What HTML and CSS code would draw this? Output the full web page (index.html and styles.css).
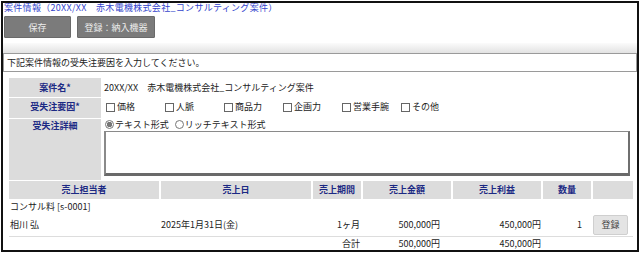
FILE: index.html
```html
<!DOCTYPE html>
<html lang="ja">
<head>
    <meta charset="UTF-8">
    <title>案件情報</title>
    <link rel="stylesheet" href="styles.css">
</head>
<body>
<div class="frame">
    <div class="head">
        <div class="title">案件情報（20XX/XX　赤木電機株式会社_コンサルティング案件）</div>
        <div class="toolbar">
            <button class="btn btn-save">保存</button>
            <button class="btn btn-reg">登録：納入機器</button>
        </div>
    </div>
    <div class="band"></div>
    <div class="notice">下記案件情報の受失注要因を入力してください。</div>

    <table class="form">
        <tr class="r1">
            <th>案件名*</th>
            <td>20XX/XX　赤木電機株式会社_コンサルティング案件</td>
        </tr>
        <tr class="r2">
            <th>受失注要因*</th>
            <td>
                <span class="chk"><i class="box"></i>価格</span><span class="chk"><i class="box"></i>人脈</span><span class="chk"><i class="box"></i>商品力</span><span class="chk"><i class="box"></i>企画力</span><span class="chk"><i class="box"></i>営業手腕</span><span class="chk"><i class="box"></i>その他</span>
            </td>
        </tr>
        <tr class="r3">
            <th>受失注詳細</th>
            <td>
                <div class="radios">
                    <span class="rad"><i class="dot on"></i>テキスト形式</span>
                    <span class="rad"><i class="dot"></i>リッチテキスト形式</span>
                </div>
                <div class="memo"></div>
            </td>
        </tr>
    </table>

    <table class="sales">
        <tr class="hd">
            <th class="c1">売上担当者</th>
            <th class="c2">売上日</th>
            <th class="c3">売上期間</th>
            <th class="c4">売上金額</th>
            <th class="c5">売上利益</th>
            <th class="c6">数量</th>
            <th class="c7"></th>
        </tr>
        <tr class="grp">
            <td colspan="7">コンサル料 [s-0001]</td>
        </tr>
        <tr class="row">
            <td class="name">相川 弘</td>
            <td class="date">2025年1月31日(金)</td>
            <td class="num n3">1ヶ月</td>
            <td class="num n4">500,000円</td>
            <td class="num n5">450,000円</td>
            <td class="num n6">1</td>
            <td class="act"><button class="btn-small">登録</button></td>
        </tr>
        <tr class="sum">
            <td></td>
            <td></td>
            <td class="num n3">合計</td>
            <td class="num n4">500,000円</td>
            <td class="num n5">450,000円</td>
            <td></td>
            <td></td>
        </tr>
    </table>
</div>
</body>
</html>
```

FILE: styles.css
```css
body {
    margin: 0;
    font-family: "Noto Sans CJK JP", "Noto Sans", sans-serif;
    font-size: 9px;
    color: #222222;
    background-color: #ffffff;
}
.frame {
    margin: 1px;
    height: 247px;
    border: 2px solid #111111;
    overflow: hidden;
}
.head {
    margin: -3px 0 0 -3px;
    width: 290px;
    height: 43px;
    padding: 1px 0 0 4px;
    box-sizing: border-box;
    background-color: #ffffff;
}
.title {
    color: #3344cc;
    line-height: 13px;
    white-space: nowrap;
    letter-spacing: 0.3px;
}
.toolbar {
    display: flex;
    gap: 6px;
    margin-top: 2px;
}
.btn {
    height: 22px;
    padding: 0;
    border: 1px solid #6a6a6a;
    border-radius: 1px;
    background-color: #7b7b7b;
    color: #ececec;
    font-family: inherit;
    font-size: 9px;
}
.btn-save {
    width: 67px;
}
.btn-reg {
    width: 78px;
}
.band {
    margin-left: -3px;
    width: 637px;
    height: 10px;
    background: linear-gradient(#fbfbfb, #e2e2e2);
}
.notice {
    height: 17px;
    line-height: 17px;
    padding-left: 3px;
    border: 1px solid #9a9a9a;
}

/* form */
.form {
    width: 629px;
    margin: 5px 0 0 4px;
    border-spacing: 2px 1px;
}
.form th {
    width: 92px;
    padding: 0;
    background-color: #dcdcdc;
    color: #1c2a84;
    font-weight: bold;
    text-align: center;
    vertical-align: top;
}
.form td {
    padding: 0 0 0 1px;
    vertical-align: top;
}
.r1 th, .r1 td {
    height: 19px;
    line-height: 19px;
}
.r2 th, .r2 td {
    height: 18px;
    line-height: 18px;
}
.r3 th {
    height: 61px;
    line-height: 12px;
    padding-top: 1px;
    box-sizing: border-box;
}
.chk {
    display: inline-flex;
    align-items: center;
    width: 59px;
}
.box {
    width: 7px;
    height: 7px;
    margin: 0 2px 0 2px;
    border: 1px solid #666666;
    background-color: #ffffff;
}
.radios {
    display: flex;
    gap: 5px;
    height: 12px;
    line-height: 12px;
}
.rad {
    display: inline-flex;
    align-items: center;
}
.dot {
    width: 7px;
    height: 7px;
    margin: 0 1px 0 1px;
    border: 1px solid #777777;
    border-radius: 50%;
    background-color: #ffffff;
}
.dot.on {
    background: radial-gradient(circle, #777777 0 2.5px, #ffffff 3px);
}
.memo {
    width: 522px;
    height: 41px;
    margin-top: 0;
    border-top: 1px solid #8a8a8a;
    border-left: 2px solid #8a8a8a;
    border-right: 2px solid #6f6f6f;
    border-bottom: 3px solid #6a6a6a;
    background-color: #ffffff;
}

/* sales */
.sales {
    width: 624px;
    margin-left: 6px;
    border-spacing: 0;
}
.sales th {
    height: 18px;
    padding: 0;
    border-left: 2px solid transparent;
    background-color: #dcdcdc;
    background-clip: padding-box;
    color: #1c2a84;
    font-weight: bold;
    text-align: center;
    box-sizing: border-box;
}
.sales th.c1 {
    border-left: 0;
    width: 150px;
}
.sales .c2 { width: 152px; }
.sales .c3 { width: 50px; }
.sales .c4 { width: 90px; }
.sales .c5 { width: 90px; }
.sales .c6 { width: 50px; }
.sales .c7 { width: 42px; }
.sales td {
    padding: 0;
    white-space: nowrap;
}
.sales .grp td {
    height: 15px;
    padding-left: 1px;
}
.sales .row td {
    height: 22px;
    border-bottom: 1px solid #dddddd;
}
.sales .name {
    padding-left: 1px;
}
.sales .date {
    padding-left: 2px;
}
.sales .num {
    text-align: right;
}
.sales .n3 { padding-right: 1px; }
.sales .n4 { padding-right: 11px; }
.sales .n5 { padding-right: 0; }
.sales .n6 { padding-right: 9px; }
.sales .act {
    padding-left: 2px;
}
.btn-small {
    width: 35px;
    height: 20px;
    padding: 0;
    border: 1px solid #cfcfcf;
    border-radius: 2px;
    background-color: #e4e4e4;
    color: #444444;
    font-family: inherit;
    font-size: 9px;
}
.sales .sum td {
    height: 14px;
}
```
